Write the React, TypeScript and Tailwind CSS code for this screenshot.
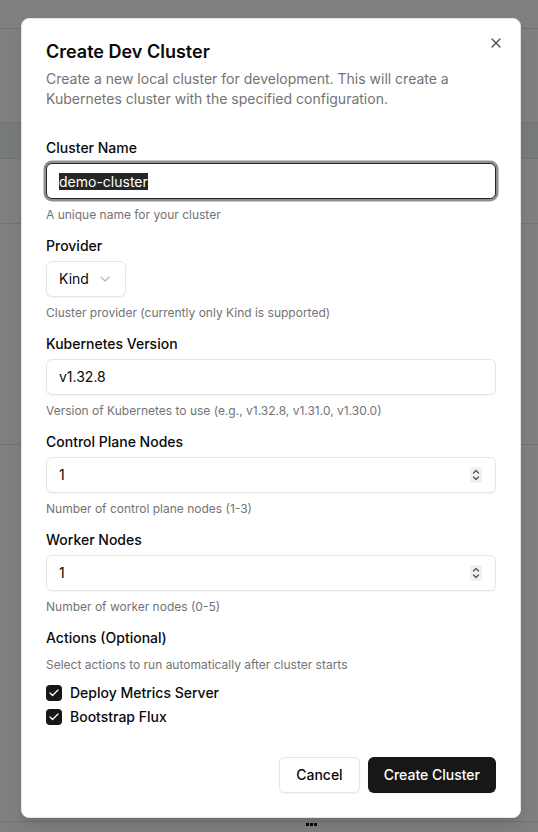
import React from "react";
import { Check, ChevronDown, X } from "lucide-react";

const font = { fontFamily: "Inter, 'Noto Sans', sans-serif" };

const Field: React.FC<{ label: string; help: string; children: React.ReactNode }> = ({
  label,
  help,
  children,
}) => (
  <div className="flex flex-col">
    <label className="text-sm font-medium leading-none text-[#0a0a0a]">{label}</label>
    <div className="mt-2">{children}</div>
    <p className="mt-2 text-xs leading-4 text-[#737373]">{help}</p>
  </div>
);

const Spinner = () => (
  <span className="flex h-4 w-3 items-center justify-center rounded-[3px] bg-[#f0f0f0]">
    <svg width="10" height="14" viewBox="0 0 10 14" fill="none" stroke="#555" strokeWidth="1.3" strokeLinecap="round" strokeLinejoin="round">
      <path d="M2.5 5 L5 2.5 L7.5 5" />
      <path d="M2.5 9 L5 11.5 L7.5 9" />
    </svg>
  </span>
);

const NumberBox: React.FC<{ value: string }> = ({ value }) => (
  <div className="flex h-9 w-full items-center justify-between rounded-md border border-[#e5e5e5] bg-white pl-3 pr-[13px] text-sm text-[#0a0a0a] shadow-xs">
    <span>{value}</span>
    <Spinner />
  </div>
);

const CheckRow: React.FC<{ label: string }> = ({ label }) => (
  <div className="flex items-center gap-2">
    <span className="flex h-4 w-4 items-center justify-center rounded-[4px] bg-[#171717]">
      <Check size={12} strokeWidth={2.5} className="text-white" />
    </span>
    <span className="text-sm font-medium leading-none text-[#0a0a0a]">{label}</span>
  </div>
);

export default function App() {
  return (
    <div className="relative h-screen w-full overflow-hidden bg-white" style={font}>
      {/* page behind the dialog */}
      <div className="flex h-full flex-col">
        <div className="h-[29px] shrink-0 border-b border-[#e5e5e5]" />
        <div className="h-[93px] shrink-0" />
        <div className="h-[37px] shrink-0 border-y border-[#e3ebe5] bg-[#eef6f0]" />
        <div className="h-[65px] shrink-0 border-b border-[#e5e5e5]" />
        <div className="h-[221px] shrink-0 border-b border-[#e5e5e5]" />
        <div className="flex-1" />
        <div className="flex h-[11px] shrink-0 items-start border-t border-[#e5e5e5] pl-[306px]">
          <div className="flex gap-[1.5px] pt-[1px]">
            <span className="h-[3px] w-[2.5px] bg-[#111]" />
            <span className="h-[3px] w-[2.5px] bg-[#111]" />
            <span className="h-[3px] w-[2.5px] bg-[#111]" />
          </div>
        </div>
      </div>

      {/* overlay */}
      <div className="absolute inset-0 bg-black/50" />

      {/* dialog */}
      <div className="absolute left-[21px] top-[18px] flex w-[500px] flex-col gap-4 rounded-lg border border-[#e5e5e5] bg-white p-6 shadow-lg">
        <button className="absolute right-4 top-4 text-[#0a0a0a] opacity-70">
          <X size={16} />
        </button>

        <div className="flex flex-col gap-2">
          <h2 className="text-lg font-semibold leading-none text-[#0a0a0a]">Create Dev Cluster</h2>
          <p className="text-sm leading-5 text-[#737373]">
            Create a new local cluster for development. This will create a Kubernetes cluster with the specified configuration.
          </p>
        </div>

        <div className="flex flex-col gap-4 py-4">
          <Field label="Cluster Name" help="A unique name for your cluster">
            <div className="flex h-9 w-full items-center rounded-md border border-[#262626] bg-white px-3 text-sm text-[#0a0a0a] ring-[2.5px] ring-[#8f8f8f]">
              <span className="bg-[#262626] leading-[17px] text-white">demo-cluster</span>
            </div>
          </Field>

          <Field label="Provider" help="Cluster provider (currently only Kind is supported)">
            <div className="flex h-9 w-fit items-center gap-2 rounded-md border border-[#e5e5e5] bg-white px-3 text-sm text-[#0a0a0a] shadow-xs">
              <span>Kind</span>
              <ChevronDown size={16} className="text-[#737373] opacity-50" />
            </div>
          </Field>

          <Field label="Kubernetes Version" help="Version of Kubernetes to use (e.g., v1.32.8, v1.31.0, v1.30.0)">
            <div className="flex h-9 w-full items-center rounded-md border border-[#e5e5e5] bg-white px-3 text-sm text-[#0a0a0a] shadow-xs">
              v1.32.8
            </div>
          </Field>

          <Field label="Control Plane Nodes" help="Number of control plane nodes (1-3)">
            <NumberBox value="1" />
          </Field>

          <Field label="Worker Nodes" help="Number of worker nodes (0-5)">
            <NumberBox value="1" />
          </Field>

          <div className="flex flex-col gap-3">
            <label className="text-sm font-medium leading-none text-[#0a0a0a]">Actions (Optional)</label>
            <p className="text-xs leading-4 text-[#737373]">Select actions to run automatically after cluster starts</p>
            <div className="flex flex-col gap-2">
              <CheckRow label="Deploy Metrics Server" />
              <CheckRow label="Bootstrap Flux" />
            </div>
          </div>
        </div>

        <div className="flex justify-end gap-2">
          <button className="h-9 rounded-md border border-[#e5e5e5] bg-white px-4 text-sm font-medium text-[#0a0a0a] shadow-xs">
            Cancel
          </button>
          <button className="h-9 rounded-md bg-[#171717] px-4 text-sm font-medium text-white shadow-xs">
            Create Cluster
          </button>
        </div>
      </div>
    </div>
  );
}
